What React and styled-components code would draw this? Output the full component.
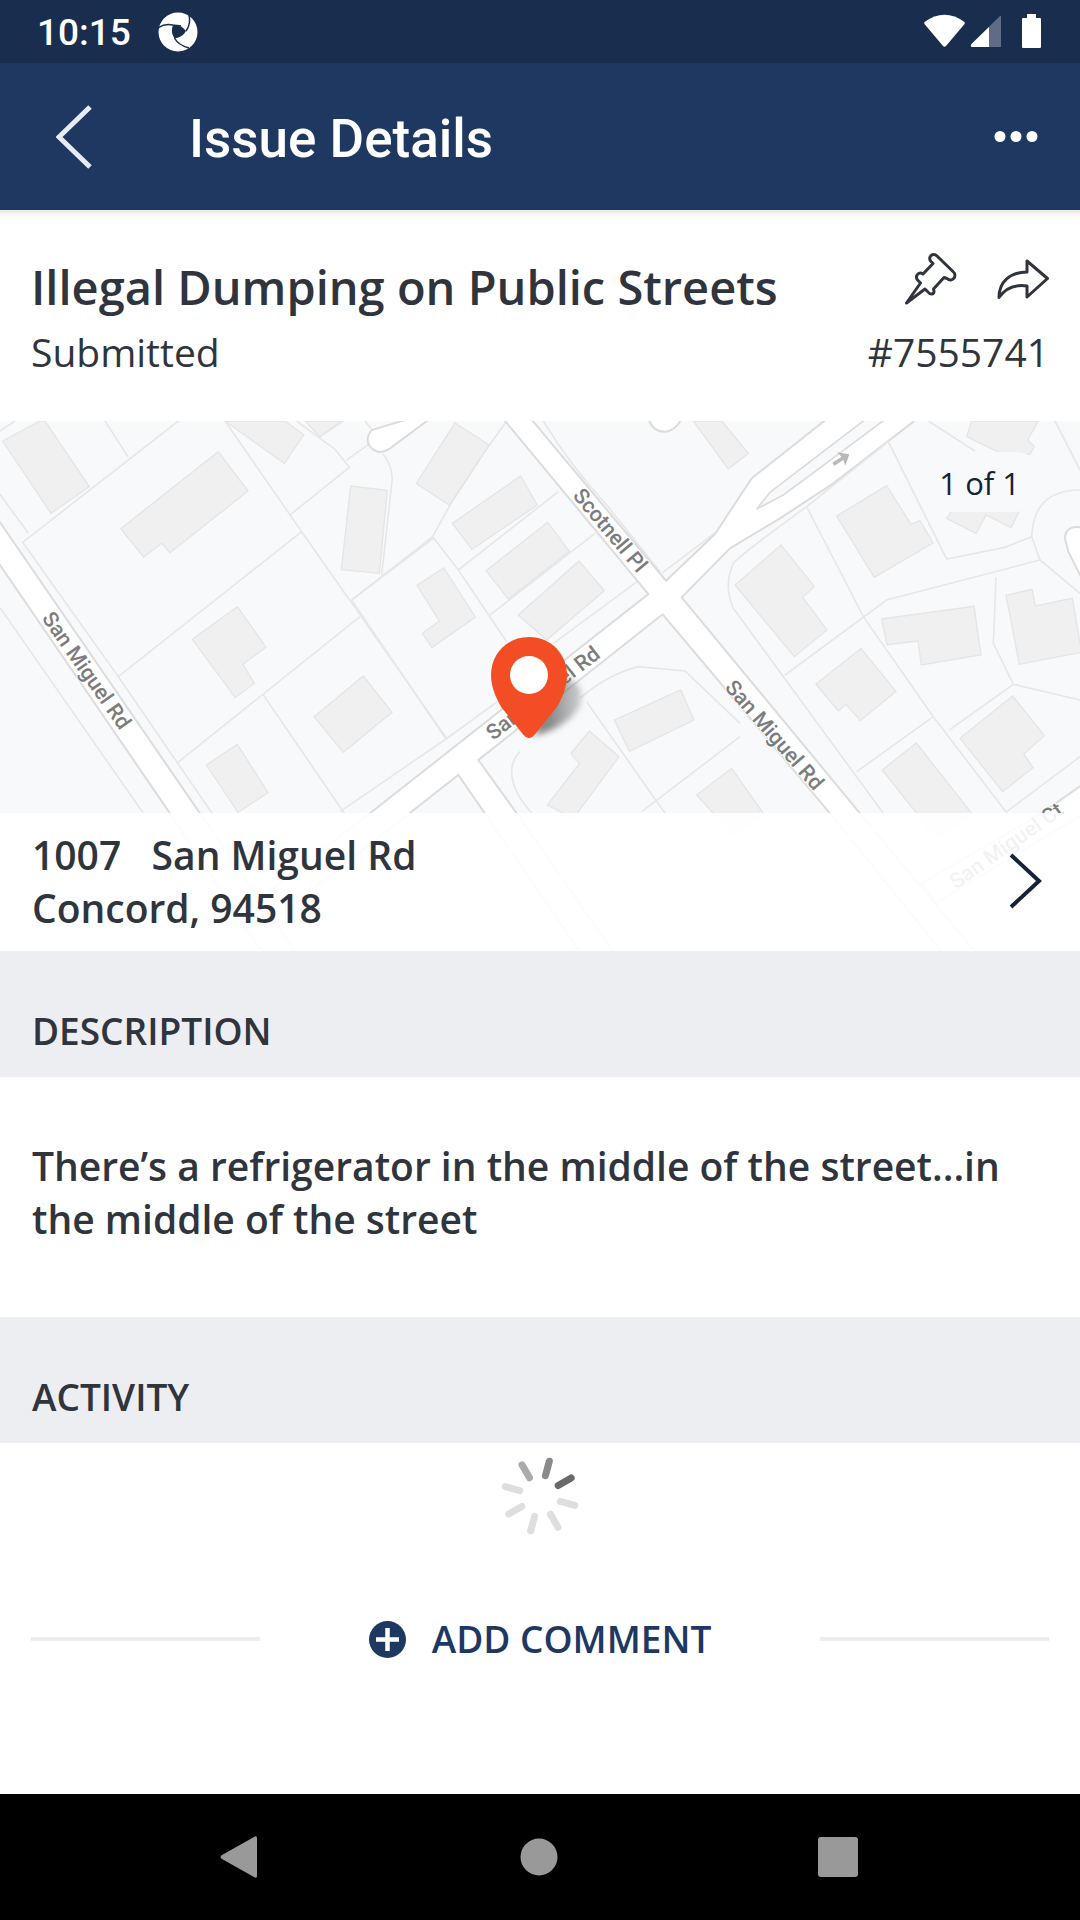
import React from "react";
import styled, { createGlobalStyle } from "styled-components";

const GlobalStyle = createGlobalStyle`
    * {
        box-sizing: border-box;
    }

    body {
        margin: 0;
        background: #fff;
        color: #2f343d;
        font-family: "Open Sans", sans-serif;
    }
`;

const Screen = styled.div`
    display: flex;
    flex-direction: column;
    min-height: 100vh;
`;

const IconButton = styled.button`
    display: flex;
    align-items: center;
    justify-content: center;
    padding: 0;
    border: 0;
    background: none;
    color: inherit;
    cursor: pointer;
`;

const StatusBar = styled.div`
    display: flex;
    align-items: center;
    height: 63px;
    padding: 0 38px 0 37px;
    background: #192e4e;
    color: #fff;
`;

const Clock = styled.span`
    font: 500 37px/44px Roboto, sans-serif;
    padding-top: 3px;
    margin-right: 27px;
`;

const StatusIcons = styled.div`
    display: flex;
    margin-left: auto;
`;

const Header = styled.header`
    display: flex;
    align-items: center;
    height: 147px;
    padding: 0 40px 0 44px;
    background: #1e3862;
    color: #fff;
`;

const BackButton = styled(IconButton)`
    width: 60px;
    height: 80px;
    color: #e6ecf6;
`;

const ScreenTitle = styled.h1`
    flex: 1;
    margin: 0 0 0 85px;
    padding-top: 4px;
    font: 500 53px/62px Roboto, sans-serif;
`;

const MoreButton = styled(IconButton)`
    width: 48px;
    height: 48px;
`;

const Summary = styled.section`
    padding: 43px 31px 38px;
    background: linear-gradient(#eeece9 3px, #f6f6fb 3px, #fff 10px);
`;

const SummaryRow = styled.div`
    display: flex;
    justify-content: space-between;
    align-items: flex-start;
    font-size: 39px;
    line-height: 62px;
`;

const IssueTitle = styled.h2`
    margin: 0;
    font-size: 47px;
    line-height: 68px;
    font-weight: 600;
`;

const Actions = styled.div`
    display: flex;
    gap: 40px;
`;

const MapBox = styled.section`
    position: relative;
    height: 530px;
    overflow: hidden;
    background: #f8f9fb;
`;

const MapDrawing = styled.svg`
    display: block;
    width: 100%;
    height: 100%;

    .parcel {
        fill: none;
        stroke: #e7e7e8;
        stroke-width: 5;
    }
    .building {
        fill: #f0f0f0;
        stroke: #e5e5e5;
        stroke-width: 4;
    }
    .road {
        fill: #fff;
        stroke: #dcdcdc;
        stroke-width: 6;
    }
    .island {
        fill: #f8f9fb;
        stroke: #dcdcdc;
        stroke-width: 5;
    }
    text {
        font-family: Roboto, sans-serif;
        font-size: 64px;
        font-weight: 500;
        fill: #7c7c7c;
        stroke: #fff;
        stroke-width: 6;
        paint-order: stroke;
    }
`;

const Counter = styled.span`
    position: absolute;
    top: 31px;
    right: 35px;
    padding: 9px 25px 7px;
    border-radius: 30px;
    background: #f8f9fb;
    color: #16223a;
    font-size: 31px;
    line-height: 44px;
`;

const Address = styled.a`
    position: absolute;
    left: 0;
    right: 0;
    bottom: 0;
    display: flex;
    align-items: center;
    justify-content: space-between;
    padding: 15px 38px 17px 32px;
    background: rgba(255, 255, 255, 0.9);
    color: #2f343d;
    font-size: 39px;
    line-height: 53px;
    font-weight: 600;
    text-decoration: none;
    white-space: pre;
`;

const SectionHead = styled.h2`
    margin: 0;
    padding: 55px 32px 21px;
    background: #edeef2;
    font-size: 37px;
    line-height: 50px;
    font-weight: 600;
`;

const Description = styled.p`
    margin: 0;
    padding: 62px 32px 72px;
    font-size: 39px;
    line-height: 53px;
    font-weight: 600;
`;

const Activity = styled.section`
    flex: 1;
    padding: 13px 31px;
`;

const Spinner = styled.svg`
    display: block;
    margin: 0 auto 78px;
`;

const CommentRow = styled.div`
    display: flex;
    align-items: center;
`;

const Rule = styled.hr`
    flex: 1;
    height: 4px;
    margin: 0;
    border: 0;
    background: #ededef;
`;

const AddComment = styled(IconButton)`
    gap: 26px;
    padding: 0 109px;
    color: #1e3862;
    font: 600 37px/50px "Open Sans", sans-serif;
`;

const NavBar = styled.nav`
    display: flex;
    justify-content: center;
    align-items: center;
    gap: 239px;
    height: 126px;
    padding-right: 2px;
    background: #000;
    color: #999;
`;

const NavButton = styled(IconButton)`
    width: 60px;
    height: 60px;
`;

// All map coordinates are in thirds of a pixel
const ParcelMap = () => (
    <MapDrawing viewBox="0 0 3240 1590" preserveAspectRatio="xMidYMid slice" aria-label="Map">
        <defs>
            <filter id="soft" x="-50%" y="-50%" width="200%" height="200%">
                <feGaussianBlur stdDeviation="10" />
            </filter>
            <linearGradient id="shade" x1="0" y1="0" x2="1" y2="0">
                <stop offset="0.3" stopColor="#555" stopOpacity="0.7" />
                <stop offset="1" stopColor="#888" stopOpacity="0.4" />
            </linearGradient>
        </defs>

        {/* west side */}
        <g transform="translate(0 -18)">
            <g className="parcel">
                <path d="M0 48L45 18M0 238L85 355M315 18L385 127M535 18L68 382L355 785L905 350M355 785L650 1215" />
                <path d="M675 18L905 350L1340 970M870 300L1048 157L1005 103L890 18M960 65L1030 18M1040 135L1110 85M1095 18L1120 50" />
                <path d="M1055 555L1300 370M1080 605L530 1045M790 840L1040 1205M1150 118Q1180 160 1176 200L1145 480" />
                <path d="M0 578L430 1195" />
            </g>
            <g className="building">
                <path d="M8 78L120 18H135L268 215L153 295Z" />
                <path d="M362 341L655 110L744 228L510 413L485 385L431 426Z" />
                <path d="M675 18H855L911 60L853 145Z" />
                <path d="M915 18L960 65L1025 18Z" />
                <path d="M1052 213L1162 226L1138 475L1024 464Z" />
                <path d="M577 673L712 575L798 696L729 748L763 805L706 848Z" />
                <path d="M942 905L1090 783L1176 892L1030 1012Z" />
                <path d="M619 1050L712 988L804 1133L714 1192Z" />
            </g>
            <path className="road" d="M-20 295L0 322L600 1195L920 1660H820L510 1195L0 450L-20 420Z" />
        </g>

        {/* middle */}
        <g transform="translate(1020 -18)">
            <g className="parcel">
                <path d="M500 18L445 95L330 270L278 365L355 465L500 680M278 365L35 555M355 465L655 230M450 600L765 355" />
                <path d="M35 555L318 972M925 475L640 685M0 1190L318 972L500 840M610 18Q690 150 800 270L960 470M965 475L1130 350" />
                <path d="M740 860L975 1195M720 850Q800 780 895 755L1035 768L1200 925M905 1190L1200 965M540 1010Q490 1060 540 1150L575 1195" />
            </g>
            <g className="building">
                <path d="M345 24L447 90L328 270L229 206Z" />
                <path d="M337 325L542 183L592 270L396 403Z" />
                <path d="M438 467L623 322L688 409L505 552Z" />
                <path d="M535 600L717 438L793 527L620 675Z" />
                <path d="M231 511L311 459L406 606L276 698L247 655L298 618Z" />
                <path d="M1060 18H1145L1225 115L1165 162Z" />
                <path d="M823 915L1022 825L1062 915L868 1009Z" />
                <path d="M748 948L837 1025L700 1210L622 1170L718 1046L693 1015Z" />
                <path d="M1070 1140L1175 1060L1270 1195L1180 1260Z" />
            </g>
            <path
                className="road"
                d="M480 0L497 20L925 537L90 1195L-250 1460L-180 1500L355 1080L590 1420L740 1640H840L530 1195L415 1035L968 598L1470 1195L1830 1640H1930L1560 1195L1025 547L1170 400L1320 310L1480 205L1720 20L1740 0H1475L1450 20L1235 190L1125 357L978 497L580 20L560 0Z"
            />
            <path className="road" d="M245 0L95 45Q75 70 88 92Q112 125 150 100L285 0Z" />
            <path className="road" d="M925 0Q930 50 975 50Q1010 48 1030 0Z" />
            <path className="island" d="M1250 282L1290 232L1580 10H1640L1330 240Z" />
        </g>

        {/* east side */}
        <g transform="translate(2040 -18)">
            <g className="parcel">
                <path d="M610 1195L160 580Q130 510 160 445Q180 420 380 275L550 605L760 905L985 1200M380 275L625 80L800 432L975 397L1055 365" />
                <path d="M745 18L885 108M315 780L620 555L1080 435L1055 365Q1060 225 1200 225M1080 435L1200 535M948 487L940 685L1000 808L1200 855" />
                <path d="M1000 808L808 945M760 905L530 1070M1125 18L1200 165M980 1190L1200 1025" />
            </g>
            <g className="building">
                <path d="M165 510L303 390L403 515L368 547L441 645L343 725Z" />
                <path d="M470 303L620 212L693 328L720 317L759 384L583 487Z" />
                <path d="M875 18L860 65L970 118H1050L1063 95L1043 75L1075 18Z" />
                <path d="M800 310L888 355L918 300L993 338L1020 285L850 240Z" />
                <path d="M605 612L882 574L903 720L724 750L714 678L621 689Z" />
                <path d="M978 541L1056 523L1066 573L1177 550L1205 712L1018 748Z" />
                <path d="M408 807L543 700L648 829L541 917L498 868L475 888Z" />
                <path d="M840 970L998 843L1093 962L1031 1017L1059 1058L968 1130Z" />
                <path d="M607 1065L709 984L875 1195L770 1270Z" />
            </g>
            <path className="road" d="M1220 340Q1155 325 1155 370L1165 410L1220 520Z" />
            <path className="road" d="M1220 1100L1070 1205L726 1404L768 1464L1220 1190Z" />
        </g>

        <text transform="translate(124 592) rotate(55)">San Miguel Rd</text>
        <text transform="translate(1716 225) rotate(50)">Scotnell Pl</text>
        <text transform="translate(2172 801) rotate(49)">San Miguel Rd</text>
        <text transform="translate(1480 960) rotate(-38)">San Miguel Rd</text>
        <text transform="translate(2868 1406) rotate(-35)">San Miguel Ct</text>
        <path d="M2500 130L2530 110" fill="none" stroke="#b9b9b9" strokeWidth="11" />
        <path d="M2512 94L2548 100L2536 134L2528 112Z" fill="#b9b9b9" />

        <path
            d="M1604 940Q1640 800 1700 770Q1760 790 1738 858Q1700 920 1604 944Z"
            fill="url(#shade)"
            filter="url(#soft)"
        />
        <path
            d="M1587 648C1520 648 1473 700 1473 762C1473 800 1490 835 1505 860L1570 941Q1587 962 1604 941L1669 860C1685 835 1701 800 1701 762C1701 700 1654 648 1587 648Z"
            fill="#f34d25"
        />
        <circle cx="1587" cy="762" r="57" fill="#fff" />
    </MapDrawing>
);

const SPOKES = ["#8a8a8a", "#696969", "#dedede", "#dedede", "#dedede", "#dedede", "#dedede", "#ababab"];

const App = () => (
    <Screen>
        <GlobalStyle />
        <StatusBar>
            <Clock>10:15</Clock>
            <svg width="40" height="40" viewBox="0 0 40 40" fill="none">
                <circle cx="20" cy="20" r="19.5" fill="#fff" />
                <path d="M15 13Q23 12 28 19Q25 25 16.5 26.5Q12 20 15 13Z" fill="#192e4e" />
                <path
                    d="M0 16Q7 11 15 13L23 14M28 19Q33 12 31 3M16.5 26Q20 33 31 36"
                    stroke="#192e4e"
                    strokeWidth="1.5"
                />
            </svg>
            <StatusIcons>
                <svg width="118" height="36" viewBox="0 0 118 36" fill="#fff">
                    <path d="M0.500 8Q20.500 -6.500 40.500 8Q41 9 40.500 10L22 32Q20.500 33.500 19 32L0.500 10Q0 9 0.500 8Z" />
                    <path d="M77 2V33H47.500Q46 31.500 47.500 30L76 2Z" opacity="0.3" />
                    <path d="M65 13V33H47.500Q46 31.500 47.500 30Z" />
                    <path d="M103 0H112V4H116Q117 4 117 5V33Q117 34 116 34H99Q98 34 98 33V5Q98 4 99 4H103Z" />
                </svg>
            </StatusIcons>
        </StatusBar>

        <Header>
            <BackButton aria-label="Back">
                <svg width="36" height="64" viewBox="0 0 36 64" fill="none" stroke="currentColor" strokeWidth="5">
                    <path d="M34 2L3 32L34 62" />
                </svg>
            </BackButton>
            <ScreenTitle>Issue Details</ScreenTitle>
            <MoreButton aria-label="More">
                <svg width="44" height="12" viewBox="0 0 44 12" fill="currentColor">
                    <circle cx="6" cy="5.500" r="5.500" />
                    <circle cx="22" cy="5.500" r="5.500" />
                    <circle cx="38" cy="5.500" r="5.500" />
                </svg>
            </MoreButton>
        </Header>

        <Summary>
            <SummaryRow>
                <IssueTitle>Illegal Dumping on Public Streets</IssueTitle>
                <Actions>
                    <IconButton aria-label="Follow">
                        <svg width="52" height="52" viewBox="0 0 52 52" fill="none" stroke="currentColor" strokeWidth="3" strokeLinejoin="round">
                            <path d="M1.500 50L15.500 30L13.500 28C9 24 13 18 18 21L28 10.500L26 8.500C22 4 28 -1 32 3L48 18.500C53 23 47 30 42 25.500L39 24.500L28.500 36L29 38C29 42 25 42 22.500 38.500L20 36Z" />
                        </svg>
                    </IconButton>
                    <IconButton aria-label="Share">
                        <svg width="52" height="52" viewBox="0 -5 52 52" fill="none" stroke="currentColor" strokeWidth="3" strokeLinejoin="round">
                            <path d="M30 3L50.500 20.500L30 39V28C17 26 8 31 2 39.500C2 24 13 14 30 14Z" />
                        </svg>
                    </IconButton>
                </Actions>
            </SummaryRow>
            <SummaryRow>
                <span>Submitted</span>
                <span>#7555741</span>
            </SummaryRow>
        </Summary>

        <MapBox>
            <ParcelMap />
            <Counter>1 of 1</Counter>
            <Address href="#map">
                <span>{"1007   San Miguel Rd\nConcord, 94518"}</span>
                <svg width="33" height="56" viewBox="0 0 33 56" fill="none" stroke="#16223a" strokeWidth="4">
                    <path d="M2 2L30 28L2 54" />
                </svg>
            </Address>
        </MapBox>

        <SectionHead>DESCRIPTION</SectionHead>
        <Description>There’s a refrigerator in the middle of the street...in the middle of the street</Description>

        <SectionHead>ACTIVITY</SectionHead>
        <Activity>
            <Spinner width="80" height="80" viewBox="-40 -40 80 80" strokeWidth="7" strokeLinecap="round">
                {SPOKES.map((color, i) => (
                    <path key={i} d="M0 -21V-36" stroke={color} transform={`rotate(${15 + i * 45})`} />
                ))}
            </Spinner>
            <CommentRow>
                <Rule />
                <AddComment>
                    <svg width="37" height="37" viewBox="0 0 37 37">
                        <circle cx="18.500" cy="18.500" r="18.500" fill="currentColor" />
                        <path d="M18.500 7V30M7 18.500H30" stroke="#fff" strokeWidth="4.500" />
                    </svg>
                    ADD COMMENT
                </AddComment>
                <Rule />
            </CommentRow>
        </Activity>

        <NavBar>
            <NavButton aria-label="Back">
                <svg width="42" height="42" viewBox="0 0 42 42" fill="currentColor">
                    <path d="M38 2V40Q38 43 35 41L3 23Q0 21 3 19L35 1Q38 -1 38 2Z" />
                </svg>
            </NavButton>
            <NavButton aria-label="Home">
                <svg width="38" height="38" viewBox="0 0 38 38" fill="currentColor">
                    <circle cx="19" cy="19" r="18.500" />
                </svg>
            </NavButton>
            <NavButton aria-label="Recents">
                <svg width="40" height="40" viewBox="0 0 40 40" fill="currentColor">
                    <rect width="40" height="40" rx="3" />
                </svg>
            </NavButton>
        </NavBar>
    </Screen>
);

export default App;
